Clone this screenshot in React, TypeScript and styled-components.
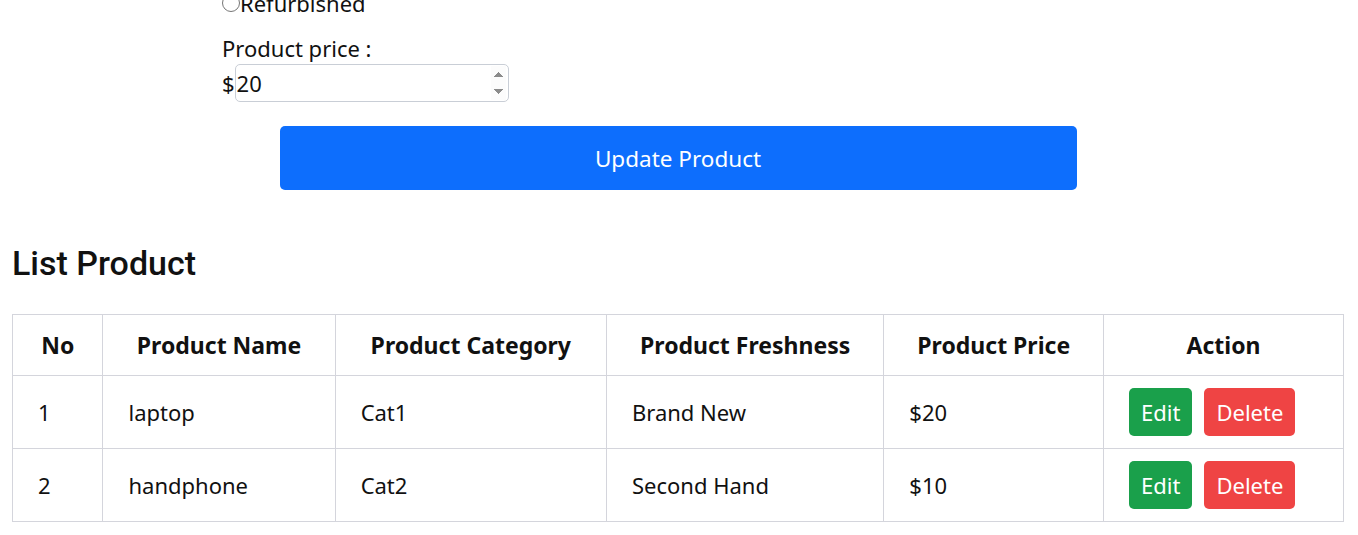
import React from 'react';
import styled, { createGlobalStyle } from 'styled-components';

const GlobalStyle = createGlobalStyle`
  html, body {
    margin: 0;
    padding: 0;
    background: #fff;
    overflow: hidden;
  }
  body {
    font-family: "Noto Sans", "Open Sans", sans-serif;
    color: #111;
  }
`;

const Page = styled.div`
  padding: 0 14px 0 12px;
  margin-top: -12px;
`;

const Form = styled.form`
  display: flex;
  flex-direction: column;
  padding-left: 210px;
`;

const RadioRow = styled.label`
  display: flex;
  align-items: center;
  font-size: 22px;
  height: 30px;

  input {
    margin: 0;
    width: 18px;
    height: 18px;
  }
`;

const Label = styled.div`
  font-size: 22px;
  margin-top: 15px;
  line-height: 30px;
`;

const PriceRow = styled.div`
  display: flex;
  align-items: center;
  font-size: 22px;
  height: 38px;
  margin-top: 1px;
`;

const PriceInput = styled.input`
  width: 274px;
  height: 38px;
  box-sizing: border-box;
  border: 1px solid #c9ced6;
  border-radius: 5px;
  padding: 0 2px 0 1px;
  font-family: "Noto Sans", sans-serif;
  font-size: 22px;
  color: #111;
  outline: none;

  &::-webkit-inner-spin-button,
  &::-webkit-outer-spin-button {
    opacity: 1;
    height: 34px;
  }
`;

const SubmitButton = styled.button`
  align-self: center;
  margin: 24px 0 0 -210px;
  width: 797px;
  height: 64px;
  border: none;
  border-radius: 5px;
  background: #0d6efd;
  color: #fff;
  font-family: "Noto Sans", sans-serif;
  font-size: 22.5px;
`;

const Heading = styled.h2`
  font-family: Roboto, sans-serif;
  font-weight: 500;
  font-size: 34px;
  margin: 48px 0 0;
  line-height: 50px;
`;

const Table = styled.table`
  margin-top: 26px;
  width: 1332px;
  border-collapse: collapse;
  font-size: 22px;

  th, td {
    border: 1px solid #d4d5dc;
  }
`;

const Th = styled.th<{ $w: number }>`
  width: ${(p) => p.$w}px;
  height: 60px;
  font-weight: 700;
  font-size: 23px;
  text-align: center;
  padding: 0;
`;

const Td = styled.td`
  height: 72px;
  padding: 0 0 0 25px;
`;

const ActionBtn = styled.button<{ $variant: 'edit' | 'delete' }>`
  height: 48px;
  padding: 0 12px;
  margin-right: 12px;
  border: none;
  border-radius: 5px;
  font-family: "Noto Sans", sans-serif;
  font-size: 22px;
  color: #fff;
  background: ${(p) => (p.$variant === 'edit' ? '#1aa04b' : '#ef4444')};
`;

const columns: [string, number][] = [
  ['No', 90],
  ['Product Name', 232],
  ['Product Category', 272],
  ['Product Freshness', 278],
  ['Product Price', 220],
  ['Action', 240],
];

const products = [
  { no: 1, name: 'laptop', category: 'Cat1', freshness: 'Brand New', price: '$20' },
  { no: 2, name: 'handphone', category: 'Cat2', freshness: 'Second Hand', price: '$10' },
];

export default function App() {
  return (
    <Page>
      <GlobalStyle />
      <Form onSubmit={(e) => e.preventDefault()}>
        <RadioRow>
          <input type="radio" name="freshness" />
          Refurbished
        </RadioRow>
        <Label>Product price :</Label>
        <PriceRow>
          $<PriceInput type="number" defaultValue={20} />
        </PriceRow>
        <SubmitButton type="submit">Update Product</SubmitButton>
      </Form>

      <Heading>List Product</Heading>
      <Table>
        <thead>
          <tr>
            {columns.map(([title, w]) => (
              <Th key={title} $w={w}>{title}</Th>
            ))}
          </tr>
        </thead>
        <tbody>
          {products.map((p) => (
            <tr key={p.no}>
              <Td>{p.no}</Td>
              <Td>{p.name}</Td>
              <Td>{p.category}</Td>
              <Td>{p.freshness}</Td>
              <Td>{p.price}</Td>
              <Td>
                <ActionBtn $variant="edit">Edit</ActionBtn>
                <ActionBtn $variant="delete">Delete</ActionBtn>
              </Td>
            </tr>
          ))}
        </tbody>
      </Table>
    </Page>
  );
}
